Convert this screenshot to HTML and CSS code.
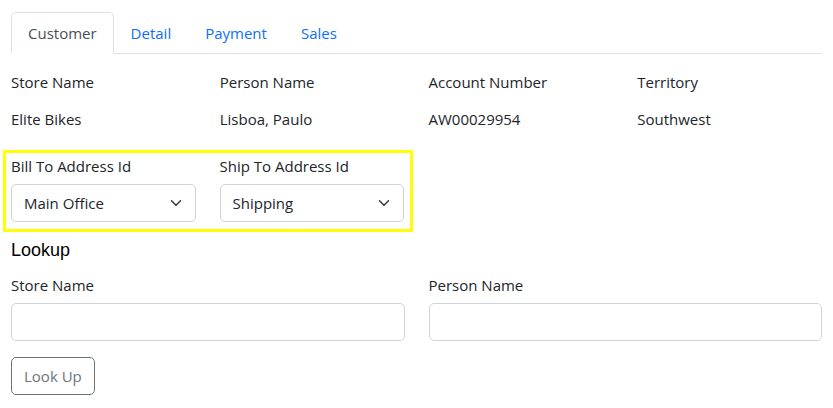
FILE: index.html
```html
<!DOCTYPE html>
<html>
<head>
<meta charset="utf-8">
<link rel="stylesheet" href="styles.css">
</head>
<body>
<div class="container">
  <ul class="tabs">
    <li class="tab active">Customer</li>
    <li class="tab">Detail</li>
    <li class="tab">Payment</li>
    <li class="tab">Sales</li>
  </ul>

  <div class="info-grid">
    <div class="lbl">Store Name</div>
    <div class="lbl">Person Name</div>
    <div class="lbl">Account Number</div>
    <div class="lbl">Territory</div>
    <div class="val">Elite Bikes</div>
    <div class="val">Lisboa, Paulo</div>
    <div class="val">AW00029954</div>
    <div class="val">Southwest</div>
  </div>

  <div class="highlight">
    <div class="field">
      <div class="lbl">Bill To Address Id</div>
      <div class="select"><span>Main Office</span>
        <svg class="chev" width="16" height="12" viewBox="0 0 16 16"><path fill="none" stroke="#343a40" stroke-linecap="round" stroke-linejoin="round" stroke-width="2" d="m2 5 6 6 6-6"/></svg>
      </div>
    </div>
    <div class="field">
      <div class="lbl">Ship To Address Id</div>
      <div class="select"><span>Shipping</span>
        <svg class="chev" width="16" height="12" viewBox="0 0 16 16"><path fill="none" stroke="#343a40" stroke-linecap="round" stroke-linejoin="round" stroke-width="2" d="m2 5 6 6 6-6"/></svg>
      </div>
    </div>
  </div>

  <h5 class="heading">Lookup</h5>

  <div class="lookup-grid">
    <div class="field">
      <div class="lbl">Store Name</div>
      <div class="input"></div>
    </div>
    <div class="field">
      <div class="lbl">Person Name</div>
      <div class="input"></div>
    </div>
  </div>

  <button class="btn">Look Up</button>
</div>
</body>
</html>
```
FILE: styles.css
```css
* { box-sizing: border-box; }
body {
  margin: 0;
  font-family: "Open Sans", "Noto Sans", sans-serif;
  font-size: 15px;
  line-height: 24px;
  color: #212529;
  background: #fff;
}
.container {
  padding: 12px 11px 0 11px;
}
.tabs {
  list-style: none;
  margin: 0;
  padding: 0;
  display: flex;
  border-bottom: 1px solid #dee2e6;
}
.tab {
  padding: 8px 16px;
  border: 1px solid transparent;
  border-top-left-radius: 5px;
  border-top-right-radius: 5px;
  margin-bottom: -1px;
  color: #0d6efd;
}
.tab.active {
  color: #495057;
  border-color: #dee2e6 #dee2e6 #fff;
  background: #fff;
}
.info-grid {
  display: grid;
  grid-template-columns: repeat(4, 1fr);
  column-gap: 24px;
  row-gap: 13px;
  margin-top: 16px;
}
.highlight {
  display: grid;
  grid-template-columns: 184.5px 184.5px;
  column-gap: 24px;
  width: 410px;
  margin: 19px 0 0 -8px;
  border: 3px solid #ffff00;
  padding: 1px 5px 7px 5px;
}
.field .lbl { margin-bottom: 6px; }
.select {
  height: 38px;
  border: 1px solid #ced4da;
  border-radius: 5px;
  padding: 6px 12px;
  display: flex;
  align-items: center;
  justify-content: space-between;
}
.chev { margin-right: -1px; }
.heading {
  margin: 7px 0 0;
  font-family: "Liberation Sans", Arial, sans-serif;
  font-size: 18px;
  font-weight: 400;
  line-height: 22px;
  color: #000;
}
.lookup-grid {
  display: grid;
  grid-template-columns: 1fr 1fr;
  column-gap: 24px;
  margin-top: 12px;
}
.lookup-grid .lbl { margin-bottom: 6px; }
.input {
  height: 38px;
  border: 1px solid #ced4da;
  border-radius: 5px;
}
.btn {
  margin-top: 16px;
  height: 38px;
  padding: 6px 12px;
  border: 1px solid #6c757d;
  border-radius: 5px;
  background: #fff;
  color: #6c757d;
  font-family: "Open Sans", "Noto Sans", sans-serif;
  font-size: 15px;
  line-height: 24px;
}
```
